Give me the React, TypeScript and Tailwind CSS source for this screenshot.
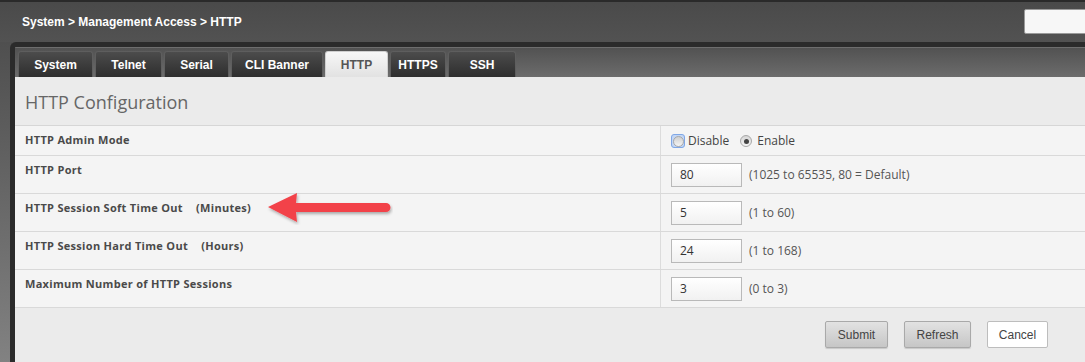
import React from "react";

const tabs = [
  { label: "System", w: "w-[75px]" },
  { label: "Telnet", w: "w-[67px]" },
  { label: "Serial", w: "w-[65px]" },
  { label: "CLI Banner", w: "w-[92px]" },
  { label: "HTTP", w: "w-[63px]", active: true },
  { label: "HTTPS", w: "w-[56px]" },
  { label: "SSH", w: "w-[68px]" },
];

function Input({ value }: { value: string }) {
  return (
    <div className="w-[71px] h-[24px] border border-[#b9b9b9] bg-gradient-to-b from-white to-[#f1f1f1] flex items-center pl-[8px] text-[12px] text-[#333]">
      {value}
    </div>
  );
}

function Row({
  label,
  children,
  h,
}: {
  label: React.ReactNode;
  children: React.ReactNode;
  h: string;
}) {
  return (
    <div className={`flex ${h} border-b border-[#d9d9d9] bg-[#f4f4f4]`}>
      <div className="w-[646px] shrink-0 border-r border-[#dcdcdc] pl-[10px] pt-[6px] text-[11px] font-bold text-[#4a4a4a] tracking-[0.3px]">
        {label}
      </div>
      <div className="flex-1 pl-[10px] flex items-center">{children}</div>
    </div>
  );
}

export default function App() {
  return (
    <div
      className="w-[1085px] h-[362px] overflow-hidden bg-[#505050] relative"
      style={{ fontFamily: '"Open Sans", "DejaVu Sans", sans-serif' }}
    >
      {/* header */}
      <div className="h-[42px] border-t-2 border-[#2a2a2a] bg-gradient-to-b from-[#4a4a4a] to-[#525252] flex items-center justify-between pl-[22px]">
        <div
          className="text-white text-[12px] font-bold"
          style={{ fontFamily: '"Liberation Sans", Arial, sans-serif' }}
        >
          System &gt; Management Access &gt; HTTP
        </div>
        <div className="w-[70px] h-[25px] mr-[-9px] mb-[2px] bg-[#f7f7f7] border border-[#9a9a9a] rounded-l-[2px]" />
      </div>

      {/* body */}
      <div className="flex h-[320px]">
        <div className="w-[10px] shrink-0 bg-gradient-to-b from-[#4f4f4f] to-[#828282]" />
        <div className="flex-1 border-l-[5px] border-t-[5px] border-[#2b2b2b] rounded-tl-[6px] flex flex-col overflow-hidden">
          {/* tab bar */}
          <div className="h-[30px] border-t border-[#6e6e6e] bg-gradient-to-b from-[#525252] to-[#6c6c6c] flex items-end pl-[3px] gap-[2px] shrink-0">
            {tabs.map((t) => (
              <div
                key={t.label}
                className={`${t.w} h-[26px] rounded-t-[3px] flex items-center justify-center text-[12px] font-bold ${
                  t.active
                    ? "bg-gradient-to-b from-[#f7f7f7] to-[#e2e2e2] text-[#555] border border-b-0 border-[#cfcfcf]"
                    : "bg-gradient-to-b from-[#4c4c4c] to-[#2e2e2e] text-white border border-b-0 border-[#5e5e5e]"
                }`}
                style={{ fontFamily: '"Liberation Sans", Arial, sans-serif' }}
              >
                {t.label}
              </div>
            ))}
          </div>

          {/* content */}
          <div className="flex-1 bg-[#ebebeb] relative">
            <div className="h-[48px] flex items-center pl-[10px] pt-[3px] text-[18px] text-[#666]">
              HTTP Configuration
            </div>
            <div className="border-t border-[#d6d6d6]">
              <Row label="HTTP Admin Mode" h="h-[30px]">
                <div className="flex items-center text-[12px] text-[#444] pt-[1px]">
                  <span className="w-[14px] h-[14px] rounded-[3px] border border-[#7fa7e6] bg-[#c3d6f4] flex items-center justify-center">
                    <span className="w-[11px] h-[11px] rounded-full bg-gradient-to-b from-[#cfcfcf] to-[#f5f5f5] border border-[#a8a8a8]" />
                  </span>
                  <span className="ml-[3px]">Disable</span>
                  <span className="ml-[11px] w-[12px] h-[12px] rounded-full bg-gradient-to-b from-[#d6d6d6] to-[#f5f5f5] border border-[#a8a8a8] flex items-center justify-center">
                    <span className="w-[5px] h-[5px] rounded-full bg-[#444]" />
                  </span>
                  <span className="ml-[5px]">Enable</span>
                </div>
              </Row>
              <Row label="HTTP Port" h="h-[38px]">
                <Input value="80" />
                <span className="ml-[7px] text-[12px] text-[#555]">(1025 to 65535, 80 = Default)</span>
              </Row>
              <Row
                label={
                  <span>
                    HTTP Session Soft Time Out <span className="ml-[10px]">(Minutes)</span>
                  </span>
                }
                h="h-[38px]"
              >
                <Input value="5" />
                <span className="ml-[7px] text-[12px] text-[#555]">(1 to 60)</span>
              </Row>
              <Row
                label={
                  <span>
                    HTTP Session Hard Time Out <span className="ml-[10px]">(Hours)</span>
                  </span>
                }
                h="h-[38px]"
              >
                <Input value="24" />
                <span className="ml-[7px] text-[12px] text-[#555]">(1 to 168)</span>
              </Row>
              <Row label="Maximum Number of HTTP Sessions" h="h-[38px]">
                <Input value="3" />
                <span className="ml-[7px] text-[12px] text-[#555]">(0 to 3)</span>
              </Row>
            </div>

            {/* buttons */}
            <div
              className="flex justify-end gap-[16px] pr-[37px] pt-[13px] text-[12px]"
              style={{ fontFamily: '"Liberation Sans", Arial, sans-serif' }}
            >
              <div className="w-[63px] h-[27px] rounded-[2px] border border-[#a9a9a9] bg-gradient-to-b from-[#e2e2e2] to-[#c6c6c6] flex items-center justify-center text-[#444] shadow-[0_1px_1px_rgba(0,0,0,0.15)]">
                Submit
              </div>
              <div className="w-[67px] h-[27px] rounded-[2px] border border-[#a9a9a9] bg-gradient-to-b from-[#e2e2e2] to-[#c6c6c6] flex items-center justify-center text-[#444] shadow-[0_1px_1px_rgba(0,0,0,0.15)]">
                Refresh
              </div>
              <div className="w-[61px] h-[27px] rounded-[2px] border border-[#bdbdbd] bg-white flex items-center justify-center text-[#444]">
                Cancel
              </div>
            </div>

            {/* annotation arrow */}
            <svg
              className="absolute left-[252px] top-[114px]"
              width="126"
              height="34"
              viewBox="0 0 126 34"
            >
              <defs>
                <filter id="sh" x="-10%" y="-20%" width="120%" height="150%">
                  <feDropShadow dx="1" dy="2" stdDeviation="1.5" floodColor="#000" floodOpacity="0.3" />
                </filter>
              </defs>
              <g filter="url(#sh)">
                <path d="M1 16 L30 2 L29 12 L119 12 A4.5 4.5 0 0 1 119 21 L29 21 L30 31 Z" fill="#f2434a" />
              </g>
            </svg>
          </div>
        </div>
      </div>
    </div>
  );
}
